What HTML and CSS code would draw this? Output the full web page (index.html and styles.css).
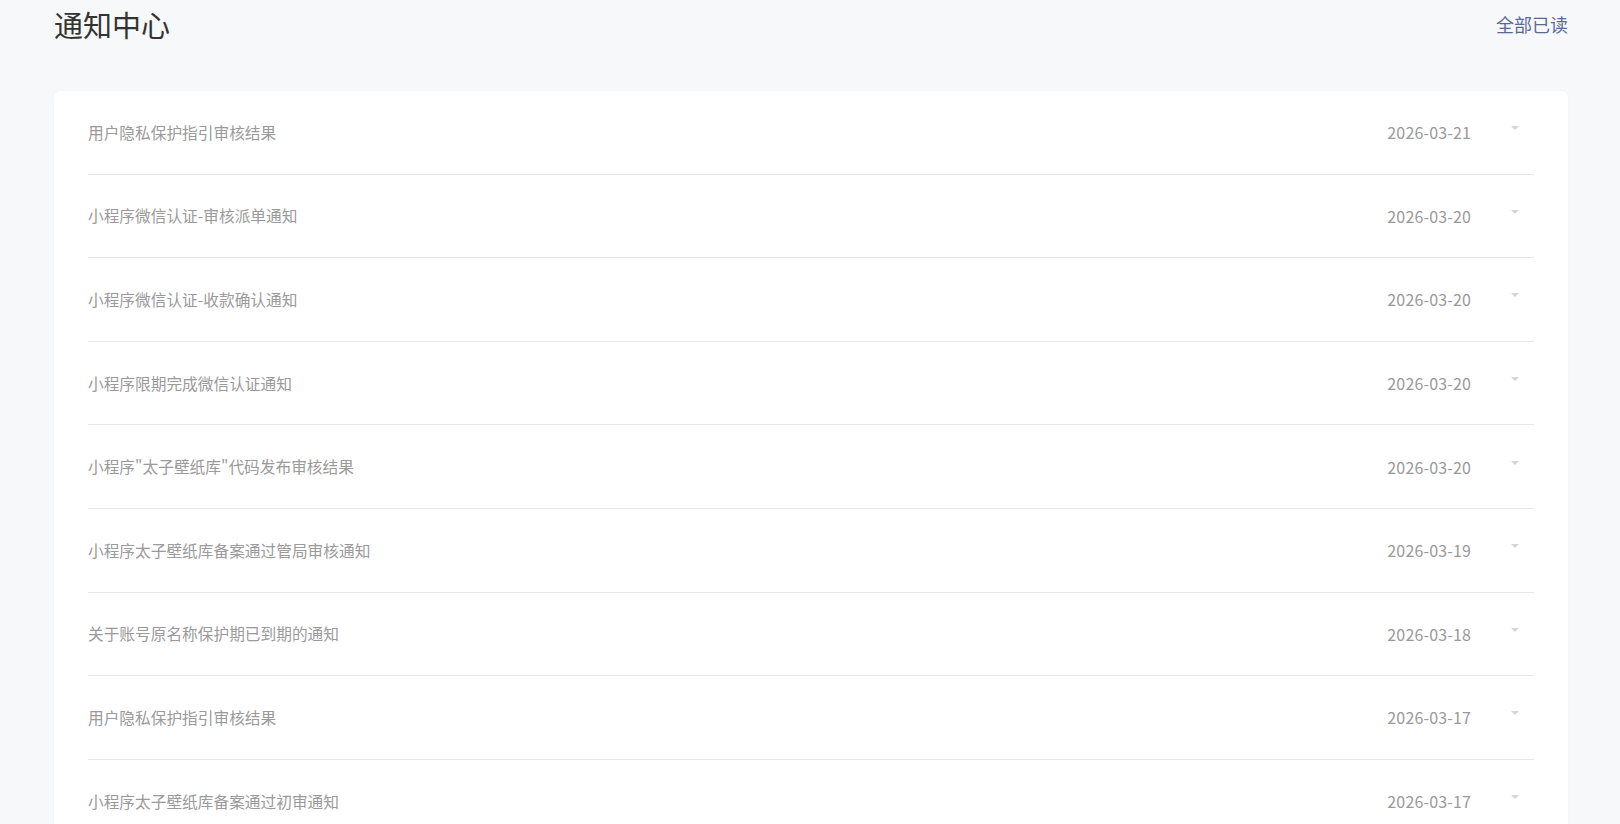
FILE: index.html
```html
<!DOCTYPE html>
<html lang="zh-CN">
<head>
<meta charset="utf-8">
<title>通知中心</title>
<link rel="stylesheet" href="styles.css">
</head>
<body>
<div class="page">
  <header class="header">
    <h1 class="title">通知中心</h1>
    <a class="read-all" href="#">全部已读</a>
  </header>
  <main class="card">
    <ul class="list">
      <li class="item"><span class="item-title">用户隐私保护指引审核结果</span><span class="item-date">2026-03-21</span><span class="caret"></span></li>
      <li class="item"><span class="item-title">小程序微信认证-审核派单通知</span><span class="item-date">2026-03-20</span><span class="caret"></span></li>
      <li class="item"><span class="item-title">小程序微信认证-收款确认通知</span><span class="item-date">2026-03-20</span><span class="caret"></span></li>
      <li class="item"><span class="item-title">小程序限期完成微信认证通知</span><span class="item-date">2026-03-20</span><span class="caret"></span></li>
      <li class="item"><span class="item-title">小程序"太子壁纸库"代码发布审核结果</span><span class="item-date">2026-03-20</span><span class="caret"></span></li>
      <li class="item"><span class="item-title">小程序太子壁纸库备案通过管局审核通知</span><span class="item-date">2026-03-19</span><span class="caret"></span></li>
      <li class="item"><span class="item-title">关于账号原名称保护期已到期的通知</span><span class="item-date">2026-03-18</span><span class="caret"></span></li>
      <li class="item"><span class="item-title">用户隐私保护指引审核结果</span><span class="item-date">2026-03-17</span><span class="caret"></span></li>
      <li class="item"><span class="item-title">小程序太子壁纸库备案通过初审通知</span><span class="item-date">2026-03-17</span><span class="caret"></span></li>
    </ul>
  </main>
</div>
</body>
</html>
```

FILE: styles.css
```css
* {
  box-sizing: border-box;
}

html, body {
  margin: 0;
  padding: 0;
}

body {
  background: #f7f8fa;
  font-family: "Noto Sans CJK SC", "Noto Sans", sans-serif;
  color: #333;
}

.page {
  margin: 0 52px 0 54px;
}

.header {
  height: 48px;
  display: flex;
  align-items: center;
  justify-content: space-between;
  margin-bottom: 43px;
}

.title {
  margin: 0;
  font-size: 29px;
  font-weight: 400;
  line-height: 48px;
  color: #333;
}

.read-all {
  font-size: 18px;
  line-height: 48px;
  color: #576b95;
  text-decoration: none;
}

.card {
  background: #fff;
  border-radius: 6px;
  box-shadow: 0 0 2px rgba(0, 0, 0, 0.04);
  padding: 0 34px;
}

.list {
  list-style: none;
  margin: 0;
  padding: 0;
}

.item {
  display: flex;
  align-items: center;
  height: 83.6px;
  border-bottom: 1px solid #e7e7e7;
  font-size: 15.7px;
  color: #9a9a9a;
}

.item-title {
  flex: 1;
  min-width: 0;
}

.item-date {
  margin-right: 40px;
  font-size: 16px;
  letter-spacing: 0.15px;
  color: #9a9a9a;
}

.caret {
  width: 0;
  height: 0;
  border-left: 4px solid transparent;
  border-right: 4px solid transparent;
  border-top: 4px solid #d5d5d5;
  margin-right: 15px;
  margin-top: -8px;
}
```
